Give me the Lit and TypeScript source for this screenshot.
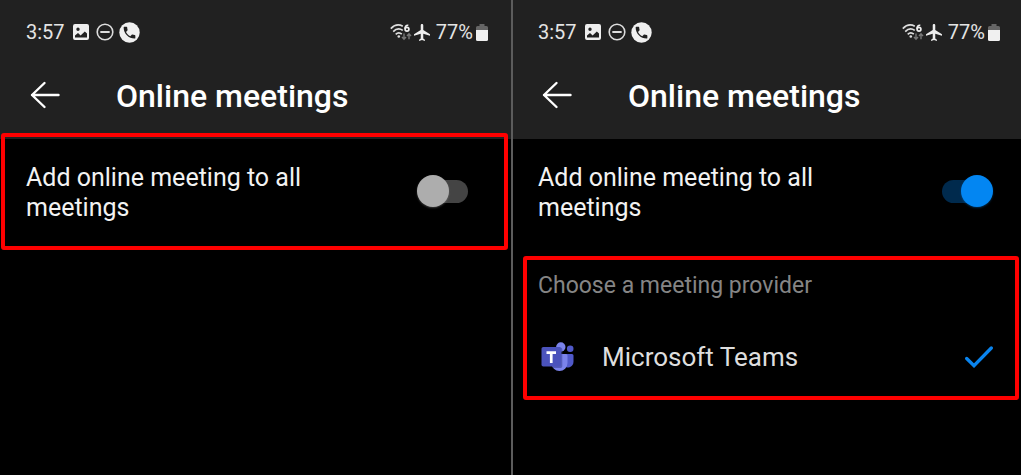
import { LitElement, html, css, svg, nothing } from "lit";
import { customElement, property } from "lit/decorators.js";

const pictureIcon = svg`<svg class="picture" viewBox="0 0 16 16" aria-hidden="true">
  <path fill="#eee" fill-rule="evenodd" d="M2 0H14A2 2 0 0 1 16 2V14A2 2 0 0 1 14 16H2A2 2 0 0 1 0 14V2A2 2 0 0 1 2 0ZM2 13.6H14V9.6L11.8 7.4L7.6 11.4L5 9L2 11.6ZM5 3.6A1.7 1.7 0 1 0 5 7A1.7 1.7 0 1 0 5 3.6Z"/></svg>`;
const dndIcon = svg`<svg class="dnd" viewBox="0 0 18 18" aria-hidden="true">
  <circle cx="9" cy="9" r="7.8" fill="none" stroke="#ddd" stroke-width="1.6"/>
  <path d="M5 9H13" stroke="#ddd" stroke-width="1.8" stroke-linecap="round"/></svg>`;
const phoneIcon = svg`<svg class="phone" viewBox="0 0 21 21" aria-hidden="true">
  <circle cx="10.5" cy="10.5" r="10.2" fill="#f0f0f0"/>
  <path transform="translate(2.7 2.9) scale(.65)" fill="#212121" d="M6.62 10.79c1.44 2.83 3.76 5.14 6.59 6.59l2.2-2.2c.27-.27.67-.36 1.02-.24 1.12.37 2.33.57 3.57.57.55 0 1 .45 1 1V20c0 .55-.45 1-1 1C10.61 21 3 13.39 3 4c0-.55.45-1 1-1h3.5c.55 0 1 .45 1 1 0 1.25.2 2.45.57 3.57.11.35.03.74-.25 1.02l-2.2 2.2z"/></svg>`;
const wifiIcon = svg`<svg class="wifi" viewBox="0 0 22 17" aria-hidden="true">
  <g fill="none" stroke="#ddd" stroke-width="1.7">
    <path d="M.8 4.6C4.2 1 9 .2 12.8 2.2"/>
    <path d="M3.2 7.6C6 4.8 9.8 4.4 12.8 6.4"/>
    <path d="M5.7 10.3C7.6 8.5 10.1 8.6 11.8 10.2"/>
  </g>
  <circle cx="8.8" cy="12.5" r="1.3" fill="#ddd"/>
  <path d="M18.3 1.3C16.2 1 15 2.6 15 4.8" fill="none" stroke="#eee" stroke-width="1.7"/>
  <circle cx="17" cy="5.2" r="1.9" fill="none" stroke="#eee" stroke-width="1.7"/>
  <path d="M14 9.5V15M12 13L14 15.3L16 13M19 15.3V10M17 12L19 9.7L21 12" fill="none" stroke="#777" stroke-width="1.4"/></svg>`;
const planeIcon = svg`<svg class="plane" viewBox="2 2 19 20" aria-hidden="true">
  <path fill="#eee" d="M21 16v-2l-8-5V3.5c0-.83-.67-1.5-1.5-1.5S10 2.67 10 3.5V9l-8 5v2l8-2.5V19l-2 1.5V22l3.5-1 3.5 1v-1.5L13 19v-5.5l8 2.5z"/></svg>`;
const batteryIcon = svg`<svg class="battery" viewBox="0 0 12 17" aria-hidden="true">
  <path fill="#666" d="M3.5 0H8.5V2H10.5A1.5 1.5 0 0 1 12 3.5V6H0V3.5A1.5 1.5 0 0 1 1.5 2H3.5Z"/>
  <path fill="#f0f0f0" d="M0 6H12V15.5A1.5 1.5 0 0 1 10.5 17H1.5A1.5 1.5 0 0 1 0 15.5Z"/></svg>`;
const backIcon = svg`<svg class="arrow" viewBox="0 0 30 28" aria-hidden="true">
  <path d="M14.5 2L2 14L14.5 26M2 14H28.5" fill="none" stroke="#fff" stroke-width="2.4" stroke-linecap="round" stroke-linejoin="round"/></svg>`;
const teamsIcon = svg`<svg class="teams" viewBox="0 0 33 30" aria-hidden="true">
  <circle cx="29.2" cy="6.8" r="3.3" fill="#5059c9"/>
  <path fill="#5059c9" d="M22 12H31A1.5 1.5 0 0 1 32.5 13.5V19.5A6 6 0 0 1 22 23.5Z"/>
  <circle cx="19.8" cy="5" r="4.7" fill="#7b83eb"/>
  <path fill="#7b83eb" d="M11.5 12H25A1.5 1.5 0 0 1 26.5 13.5V21A8 8 0 0 1 10.5 21Z"/>
  <path fill="#40489f" d="M14 5.5H19.5A1.8 1.8 0 0 1 21.3 7.3V24.2A1.8 1.8 0 0 1 19.5 26H11.5Z" opacity=".65"/>
  <rect x=".5" y="5" width="19.5" height="19.5" rx="1.8" fill="#4b53bc"/>
  <path fill="#fff" d="M5.5 9.3H15V11.9H11.6V21H8.9V11.9H5.5Z"/></svg>`;
const checkIcon = svg`<svg class="check" viewBox="0 0 28 22" aria-hidden="true">
  <path d="M1.7 12.5L9 19.7L26.3 2" fill="none" stroke="#0a84ee" stroke-width="3.3" stroke-linecap="round"/></svg>`;

@customElement("settings-screen")
class SettingsScreen extends LitElement {
  @property({ type: Boolean }) enabled = false;

  static styles = css`
    :host {
      display: block;
      min-width: 0;
      background: #000;
    }
    svg {
      display: block;
      flex: none;
    }
    .header {
      background: #212121;
      padding: 20px var(--tail) 23px var(--edge);
    }
    .status {
      display: flex;
      align-items: center;
      height: 24px;
      color: #e4e4e4;
      font-size: 20px;
      line-height: 24px;
    }
    .picture { width: 16px; height: 16px; margin-left: 8px; }
    .dnd { width: 18px; height: 18px; margin-left: 7px; }
    .phone { width: 21px; height: 21px; margin-left: 5px; }
    .wifi { width: 22px; height: 17px; margin-left: auto; }
    .plane { width: 16px; height: 17px; margin: 0 6px 0 2px; }
    .battery { width: 12px; height: 17px; margin-left: 3px; }
    .title {
      display: flex;
      align-items: center;
      gap: 52px;
      margin-top: 32px;
    }
    .back {
      padding: 0 4px 2px;
      border: 0;
      background: none;
    }
    .arrow { width: 30px; height: 28px; }
    h1 {
      margin: 0;
      color: #fff;
      font-size: 32px;
      font-weight: 500;
      line-height: 40px;
    }
    .setting {
      position: relative;
      display: flex;
      align-items: center;
      justify-content: space-between;
      padding: 24px var(--end) 28px var(--edge);
    }
    label {
      max-width: 300px;
      color: #f2f2f2;
      font-size: 25px;
      line-height: 30px;
    }
    .switch {
      appearance: none;
      position: relative;
      display: flex;
      align-items: center;
      flex: none;
      width: 63px;
      height: 32px;
      margin: 0 0 4px;
    }
    .switch::before {
      content: "";
      width: 39px;
      height: 23px;
      margin: 0 auto;
      border-radius: 12px;
      background: #444;
    }
    .switch::after {
      content: "";
      position: absolute;
      left: 0;
      width: 32px;
      height: 32px;
      border-radius: 50%;
      background: #adadad;
      box-shadow: 0 1px 2px #adadad55;
    }
    .switch:checked::before { background: #002a4d; }
    .switch:checked::after {
      left: auto;
      right: 0;
      background: #0386f2;
      box-shadow: 0 1px 2px #0386f255;
    }
    .providers {
      position: relative;
      margin-top: 5px;
      padding: 16px var(--end) 27px var(--edge);
    }
    h2 {
      margin: 0;
      color: #858585;
      font-size: 23px;
      font-weight: 400;
      line-height: 28px;
    }
    .provider {
      display: flex;
      align-items: center;
      width: 100%;
      margin-top: 41px;
      padding: 0 0 0 3px;
      border: 0;
      background: none;
      color: #dedede;
      font: inherit;
      font-size: 26px;
      line-height: 32px;
      text-align: left;
    }
    .teams { width: 33px; height: 30px; margin-right: 28px; }
    .check { width: 28px; height: 22px; margin-left: auto; }
    .marked::after {
      content: "";
      position: absolute;
      inset: var(--mark);
      border: 4px solid #f00;
      border-radius: 3px;
      pointer-events: none;
    }
    .setting.marked { --mark: -6px 3px 1px 1px; }
    .providers.marked { --mark: 0 2px 0 10px; }
  `;

  render() {
    return html`
      <header class="header">
        <div class="status">
          <span>3:57</span>${pictureIcon}${dndIcon}${phoneIcon}
          ${wifiIcon}${planeIcon}<span>77%</span>${batteryIcon}
        </div>
        <div class="title">
          <button class="back" aria-label="Back">${backIcon}</button>
          <h1>Online meetings</h1>
        </div>
      </header>
      <section class="setting ${this.enabled ? "" : "marked"}">
        <label for="all">Add online meeting to all meetings</label>
        <input class="switch" id="all" type="checkbox" role="switch" .checked=${this.enabled} />
      </section>
      ${this.enabled
        ? html`<section class="providers marked">
            <h2>Choose a meeting provider</h2>
            <button class="provider" aria-pressed="true">
              ${teamsIcon}<span>Microsoft Teams</span>${checkIcon}
            </button>
          </section>`
        : nothing}
    `;
  }
}

@customElement("app-root")
class AppRoot extends LitElement {
  static styles = css`
    :host {
      display: block;
      background: #000;
      font-family: Roboto, "Liberation Sans", sans-serif;
    }
    .screens {
      display: grid;
      grid-template-columns: 511fr 2px 508fr;
      min-height: 100vh;
    }
    .divider { background: #5c5c5c; }
    .first { --edge: 26px; --end: 31px; --tail: 23px; }
    .second { --edge: 25px; --end: 28px; --tail: 21px; }
  `;

  render() {
    return html`<main class="screens">
      <settings-screen class="first"></settings-screen>
      <div class="divider"></div>
      <settings-screen class="second" enabled></settings-screen>
    </main>`;
  }
}
